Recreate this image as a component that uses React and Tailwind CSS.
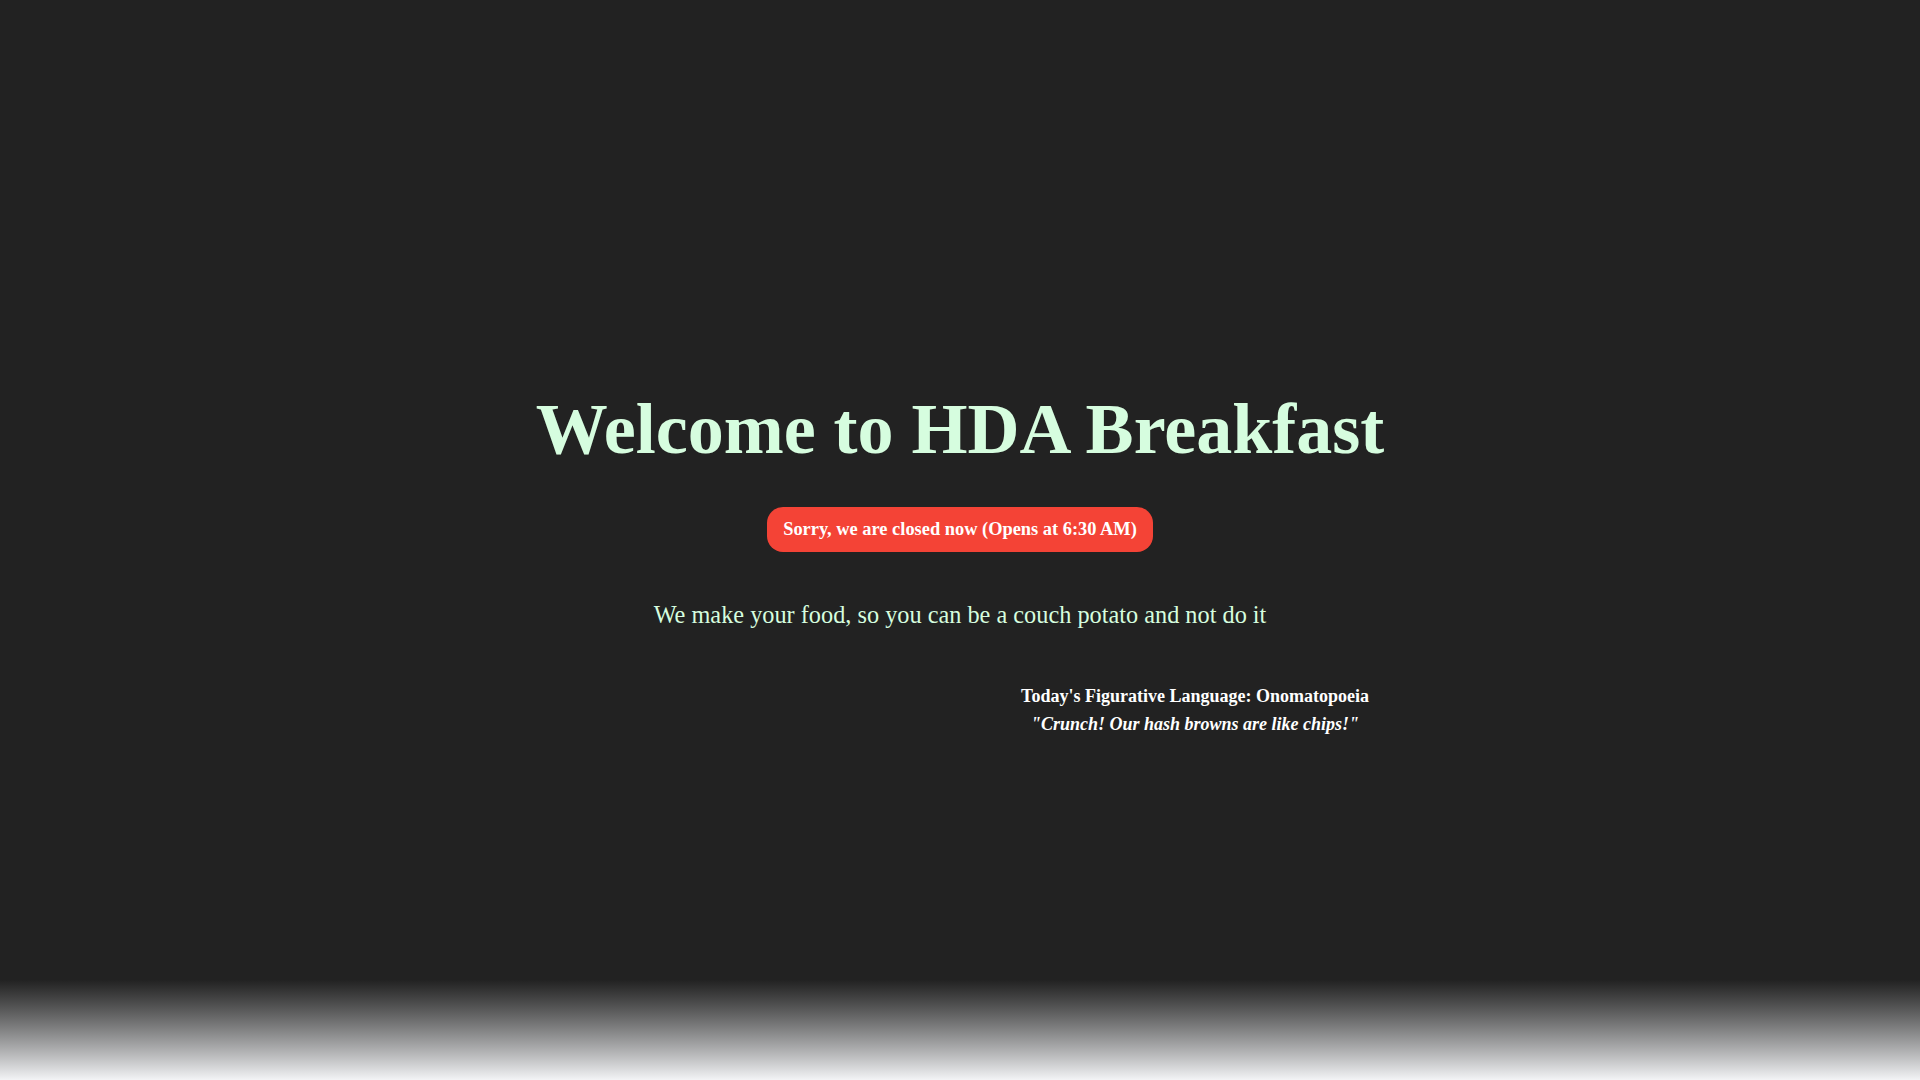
const App = () => {
  return (
    <div
      className="min-h-screen flex flex-col bg-[#222222] text-[#d6fddf]"
      style={{ fontFamily: '"Liberation Serif", "Times New Roman", serif' }}
    >
      <main className="flex-1 h-[980px] flex flex-col items-center pt-[393px]">
        <h1 className="text-[72px] leading-none font-bold">Welcome to HDA Breakfast</h1>

        <div className="mt-[42px] bg-[#f44336] text-white font-bold text-[18.4px] leading-none px-4 h-[45px] flex items-center rounded-[16px]">
          Sorry, we are closed now (Opens at 6:30 AM)
        </div>

        <p className="mt-[45px] text-[24.3px] leading-[36px]">
          We make your food, so you can be a couch potato and not do it
        </p>

        <div className="mt-[49px] w-[940px] grid grid-cols-2">
          <div></div>
          <div className="text-center text-white text-[18px] leading-[28px]">
            <p className="font-bold">Today's Figurative Language: Onomatopoeia</p>
            <p className="italic font-bold">"Crunch! Our hash browns are like chips!"</p>
          </div>
        </div>
      </main>

      <footer className="h-[100px] bg-gradient-to-b from-[#222222] to-[#f3f4f6]"></footer>
    </div>
  );
};

export default App;
